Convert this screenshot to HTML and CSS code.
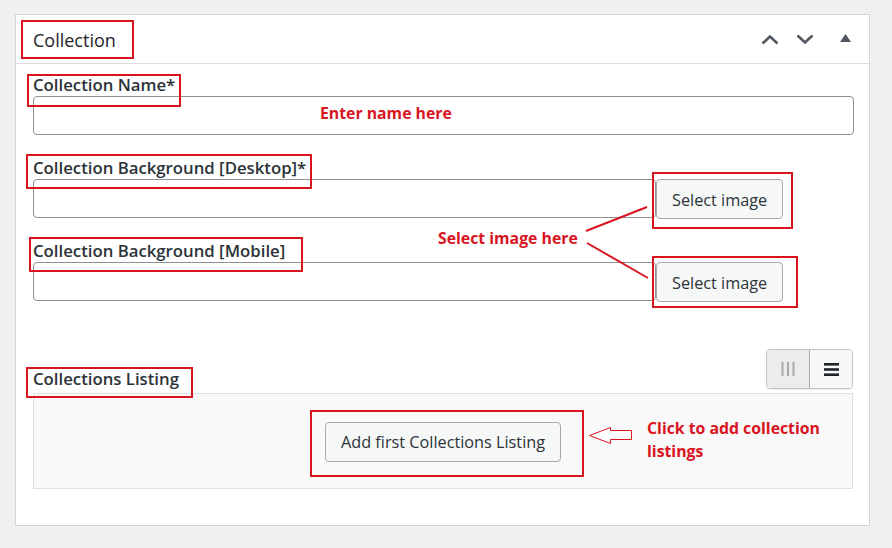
FILE: index.html
```html
<!DOCTYPE html>
<html lang="en">
<head>
<meta charset="utf-8">
<title>Collection</title>
<link rel="stylesheet" href="styles.css">
</head>
<body>
<div class="page">
  <div class="panel">
    <div class="panel-head">
      <h2 class="panel-title">Collection</h2>
      <div class="head-actions">
        <svg class="chev" width="18" height="11" viewBox="0 0 18 11"><polyline points="1.5,9.5 9,2.5 16.5,9.5" fill="none" stroke="#50575e" stroke-width="2.6"/></svg>
        <svg class="chev" width="18" height="11" viewBox="0 0 18 11"><polyline points="1.5,1.5 9,8.5 16.5,1.5" fill="none" stroke="#50575e" stroke-width="2.6"/></svg>
        <svg class="tri" width="11" height="8" viewBox="0 0 11 8"><polygon points="0,8 5.5,0 11,8" fill="#50575e"/></svg>
      </div>
    </div>
    <div class="panel-body">
      <div class="field">
        <label class="field-label">Collection Name*</label>
        <input class="text-input" type="text">
      </div>
      <div class="field">
        <label class="field-label">Collection Background [Desktop]*</label>
        <div class="image-row">
          <input class="text-input image-input" type="text">
          <button class="btn">Select image</button>
        </div>
      </div>
      <div class="field last">
        <label class="field-label">Collection Background [Mobile]</label>
        <div class="image-row">
          <input class="text-input image-input" type="text">
          <button class="btn">Select image</button>
        </div>
      </div>
      <div class="listing-head">
        <span class="field-label">Collections Listing</span>
        <div class="toggle">
          <span class="toggle-btn off">
            <svg width="14" height="14" viewBox="0 0 14 14"><rect x="0.5" y="0" width="2" height="14" fill="#a7aaad"/><rect x="6" y="0" width="2" height="14" fill="#a7aaad"/><rect x="11.5" y="0" width="2" height="14" fill="#a7aaad"/></svg>
          </span>
          <span class="toggle-btn on">
            <svg width="15" height="13" viewBox="0 0 15 13"><rect x="0" y="0" width="15" height="2.6" fill="#1d2327"/><rect x="0" y="5.2" width="15" height="2.6" fill="#1d2327"/><rect x="0" y="10.4" width="15" height="2.6" fill="#1d2327"/></svg>
          </span>
        </div>
      </div>
      <div class="listing-box">
        <button class="btn">Add first Collections Listing</button>
      </div>
    </div>
  </div>

  <div class="mark m-title"></div>
  <div class="mark m-name"></div>
  <div class="mark m-desktop"></div>
  <div class="mark m-mobile"></div>
  <div class="mark m-sel1"></div>
  <div class="mark m-sel2"></div>
  <div class="mark m-listing"></div>
  <div class="mark m-add"></div>

  <div class="note n-name">Enter name here</div>
  <div class="note n-select">Select image here</div>
  <div class="note n-click">Click to add collection<br>listings</div>

  <svg class="overlay" width="892" height="548" viewBox="0 0 892 548">
    <line x1="586" y1="231" x2="647" y2="207" stroke="#d8151f" stroke-width="2"/>
    <line x1="587" y1="243" x2="648" y2="278" stroke="#d8151f" stroke-width="2"/>
    <polygon points="589.5,435.5 610.5,427.5 610.5,430.5 631.5,430.5 631.5,439.5 610.5,439.5 610.5,443.5" fill="#fff" stroke="#d8151f" stroke-width="1"/>
  </svg>
</div>
</body>
</html>
```
FILE: styles.css
```css
html, body {
  margin: 0;
  padding: 0;
  background: #f0f0f1;
  overflow: hidden;
}
body {
  font-family: "Open Sans", "Noto Sans", sans-serif;
  color: #1d2327;
}
.page {
  position: relative;
  width: 892px;
  height: 548px;
  padding: 14px 0 0 15px;
  box-sizing: border-box;
}
.panel {
  width: 853px;
  background: #fff;
  border: 1px solid #d3d4d6;
}
.panel-head {
  height: 48px;
  border-bottom: 1px solid #dcdcde;
  display: flex;
  align-items: center;
  padding: 0 18px 0 17px;
}
.panel-title {
  margin: 1px 0 0;
  font-size: 18px;
  font-weight: 400;
  line-height: 24px;
  color: #1d2327;
}
.head-actions {
  margin-left: auto;
  display: flex;
  align-items: center;
}
.chev {
  display: block;
  margin-left: 17px;
  margin-top: 1px;
}
.tri {
  display: block;
  margin-left: 26px;
  margin-top: -3px;
}
.panel-body {
  padding: 10px 15px 36px 17px;
}
.field {
  margin-bottom: 22px;
}
.field.last {
  margin-bottom: 0;
}
.field-label {
  display: block;
  font-size: 16.75px;
  font-weight: 600;
  line-height: 21px;
  margin-bottom: 1px;
  color: #2c3338;
}
.text-input {
  display: block;
  box-sizing: border-box;
  width: 100%;
  height: 39px;
  margin: 0;
  border: 1px solid #8c8f94;
  border-radius: 4px;
  background: #fff;
}
.image-row {
  display: flex;
  align-items: stretch;
  height: 39px;
}
.image-input {
  flex: 0 0 623px;
  width: 623px;
  height: 39px;
}
.btn {
  box-sizing: border-box;
  height: 40px;
  padding: 0 15px;
  margin: 0;
  font-family: "Open Sans", "Noto Sans", sans-serif;
  font-size: 16.25px;
  font-weight: 400;
  color: #2c3338;
  background: #f6f7f7;
  border: 1px solid #a7aaad;
  border-radius: 4px;
  white-space: nowrap;
}
.image-row .btn {
  height: 40px;
  padding-top: 1px;
}
.listing-head {
  margin-top: 48px;
  display: flex;
  align-items: flex-end;
  justify-content: space-between;
}
.listing-head .field-label {
  margin-bottom: 0;
}
.toggle {
  display: flex;
  height: 40px;
  box-sizing: border-box;
  border: 1px solid #c3c4c7;
  border-radius: 4px;
  overflow: hidden;
  margin-right: 1px;
  box-shadow: 0 1px 1px rgba(0,0,0,0.08);
}
.toggle-btn {
  width: 42px;
  display: flex;
  align-items: center;
  justify-content: center;
}
.toggle-btn.off {
  background: #ececec;
  border-right: 1px solid #a7aaad;
}
.toggle-btn.on {
  background: #f6f7f7;
  width: 42px;
}
.listing-box {
  margin-top: 4px;
  margin-right: 1px;
  height: 96px;
  padding-top: 2px;
  box-sizing: border-box;
  background: #f9f9f9;
  border: 1px solid #e0e0e2;
  display: flex;
  align-items: center;
  justify-content: center;
}
.mark {
  position: absolute;
  box-sizing: border-box;
  border: 2px solid #d8151f;
}
.m-title { left: 21px; top: 20px; width: 113px; height: 39px; }
.m-name { left: 27px; top: 74px; width: 154px; height: 33px; }
.m-desktop { left: 26px; top: 154px; width: 286px; height: 35px; }
.m-mobile { left: 29px; top: 237px; width: 274px; height: 35px; }
.m-sel1 { left: 652px; top: 172px; width: 141px; height: 57px; }
.m-sel2 { left: 652px; top: 256px; width: 146px; height: 52px; }
.m-listing { left: 26px; top: 367px; width: 167px; height: 31px; }
.m-add { left: 310px; top: 410px; width: 274px; height: 67px; }
.note {
  position: absolute;
  font-family: "Open Sans", "Noto Sans", sans-serif;
  font-size: 15.8px;
  font-weight: 700;
  line-height: 20px;
  color: #d8151f;
  white-space: nowrap;
}
.n-name { left: 320px; top: 103px; }
.n-select { left: 438px; top: 228px; }
.n-click { left: 647px; top: 417px; line-height: 23px; }
.overlay {
  position: absolute;
  left: 0;
  top: 0;
  pointer-events: none;
}
```
